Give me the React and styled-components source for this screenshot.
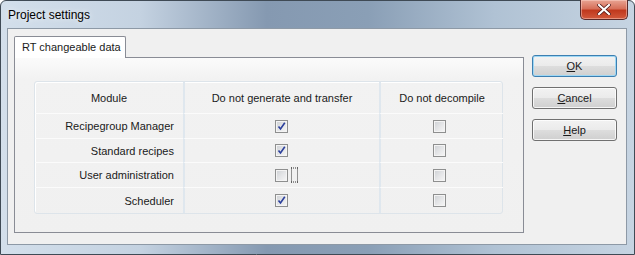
import React from "react";
import styled, { createGlobalStyle } from "styled-components";

const GlobalStyle = createGlobalStyle`
  html, body {
    margin: 0;
    padding: 0;
    background: #ffffff;
  }
  * {
    box-sizing: border-box;
  }
`;

const rows = [
  { name: "Recipegroup Manager", generate: true, decompile: false },
  { name: "Standard recipes", generate: true, decompile: false },
  { name: "User administration", generate: false, decompile: false, focus: true },
  { name: "Scheduler", generate: true, decompile: false },
];

const rowHeights = [25, 24, 25, 26];

export default function App() {
  return (
    <>
      <GlobalStyle />
      <Window>
        <TitleBar>
          <Title>Project settings</Title>
          <CloseButton>
            <svg width="14" height="11" viewBox="0 0 14 11">
              <path
                d="M2 1 L12 10 M12 1 L2 10"
                stroke="#4a1010"
                strokeWidth="3.6"
                strokeLinecap="square"
              />
              <path
                d="M2 1 L12 10 M12 1 L2 10"
                stroke="#ffffff"
                strokeWidth="2.2"
                strokeLinecap="square"
              />
            </svg>
          </CloseButton>
        </TitleBar>
        <Client>
          <TabControl>
            <TabStrip>
              <Tab>RT changeable data</Tab>
            </TabStrip>
            <TabPanel>
              <Table>
                <HeaderCell>Module</HeaderCell>
                <HeaderCell $divider>Do not generate and transfer</HeaderCell>
                <HeaderCell $divider>Do not decompile</HeaderCell>
                {rows.map((row, i) => (
                  <React.Fragment key={row.name}>
                    <LabelCell style={{ height: rowHeights[i] }}>{row.name}</LabelCell>
                    <BoxCell $divider>
                      <Check checked={row.generate} />
                      {row.focus && <FocusMark />}
                    </BoxCell>
                    <BoxCell $divider $shift>
                      <Check checked={row.decompile} />
                    </BoxCell>
                  </React.Fragment>
                ))}
              </Table>
            </TabPanel>
          </TabControl>
          <Buttons>
            <Button $default>
              <u>O</u>K
            </Button>
            <Button>
              <u>C</u>ancel
            </Button>
            <Button>
              <u>H</u>elp
            </Button>
          </Buttons>
        </Client>
      </Window>
    </>
  );
}

const Check = ({ checked }) => (
  <CheckBox>
    {checked && (
      <svg width="9" height="9" viewBox="0 0 9 9">
        <path
          d="M1.5 4.5 L3.5 7 L7.8 0.8"
          fill="none"
          stroke="#2b3f9c"
          strokeWidth="1.6"
        />
      </svg>
    )}
  </CheckBox>
);

const Window = styled.div`
  width: 635px;
  height: 255px;
  display: flex;
  flex-direction: column;
  padding: 0 7px 9px 6px;
  border: 1px solid #3f4a55;
  border-radius: 6px 6px 0 0;
  background: linear-gradient(
    90deg,
    #d3dfeb 0%,
    #c4d2e1 22%,
    #8599b1 42%,
    #8a9fb6 58%,
    #b0c2d4 78%,
    #c6d4e2 100%
  );
  font-family: "Liberation Sans", Arial, sans-serif;
`;

const TitleBar = styled.div`
  height: 28px;
  display: flex;
  justify-content: space-between;
  align-items: flex-start;
`;

const Title = styled.div`
  margin-top: 7px;
  margin-left: 1px;
  font-size: 12px;
  color: #000000;
  text-shadow: 0 0 6px rgba(255, 255, 255, 0.9);
`;

const CloseButton = styled.div`
  width: 48px;
  height: 20px;
  margin-top: -1px;
  margin-right: -1px;
  display: flex;
  align-items: center;
  justify-content: center;
  border: 1px solid #5a2a2a;
  border-top: none;
  border-radius: 0 0 5px 5px;
  background: linear-gradient(180deg, #e8a493 0%, #d7705a 45%, #c0391e 55%, #d2593c 100%);
  box-shadow: inset 0 0 0 1px rgba(255, 220, 210, 0.45);
`;

const Client = styled.div`
  flex: 1;
  display: flex;
  align-items: flex-start;
  padding: 7px 9px 11px 6px;
  background: #f0f0f0;
  border: 1px solid #8d99a6;
`;

const TabControl = styled.div`
  width: 510px;
  height: 197px;
  display: flex;
  flex-direction: column;
`;

const TabStrip = styled.div`
  display: flex;
  height: 21px;
  position: relative;
  z-index: 1;
`;

const Tab = styled.div`
  width: 112px;
  height: 22px;
  padding: 4px 0 0 7px;
  font-size: 11px;
  white-space: nowrap;
  color: #1a1a1a;
  background: #ffffff;
  border: 1px solid #898c95;
  border-bottom: none;
  border-radius: 2px 2px 0 0;
`;

const TabPanel = styled.div`
  flex: 1;
  padding: 23px 20px 0 19px;
  border: 1px solid #898c95;
  background: linear-gradient(180deg, #fbfbfb 0%, #f2f2f2 12%, #f0f0f0 100%);
`;

const Table = styled.div`
  display: grid;
  grid-template-columns: 148px 196px 124px;
  grid-auto-rows: auto;
  border: 1px solid #dde4ea;
  border-radius: 3px;
  box-shadow: inset 1px 1px 0 #ffffff;
`;

const Cell = styled.div`
  display: flex;
  align-items: center;
  font-size: 11px;
  white-space: nowrap;
  color: #1a1a1a;
  border-top: 1px solid #fbfbfb;
  border-left: ${(p) => (p.$divider ? "2px solid #dfe7ee" : "none")};
`;

const HeaderCell = styled(Cell)`
  height: 31px;
  justify-content: center;
  border-top: none;
`;

const LabelCell = styled(Cell)`
  justify-content: flex-end;
  padding-right: 9px;
`;

const BoxCell = styled(Cell)`
  justify-content: center;
  position: relative;
  padding-right: ${(p) => (p.$shift ? "5px" : "2px")};
`;

const CheckBox = styled.div`
  width: 13px;
  height: 13px;
  display: flex;
  align-items: center;
  justify-content: center;
  border: 1px solid #8e8f8f;
  background: linear-gradient(135deg, #cdd0d4 0%, #e4e5e7 50%, #f7f7f7 100%);
  box-shadow: inset 0 0 0 1px #f4f4f4;
`;

const FocusMark = styled.div`
  position: absolute;
  left: 106px;
  top: 50%;
  transform: translateY(-50%);
  width: 7px;
  height: 15px;
  border: 1px dotted #333333;
`;

const Buttons = styled.div`
  display: flex;
  flex-direction: column;
  gap: 10px;
  margin-left: 8px;
  margin-top: 19px;
`;

const Button = styled.div`
  width: 85px;
  height: 22px;
  display: flex;
  align-items: center;
  justify-content: center;
  font-size: 11px;
  color: #1a1a1a;
  border: 1px solid ${(p) => (p.$default ? "#3c7fb1" : "#707070")};
  border-radius: 3px;
  background: linear-gradient(180deg, #f2f2f2 0%, #ebebeb 48%, #dddddd 52%, #cfcfcf 100%);
  box-shadow: inset 0 0 0 1px
    ${(p) => (p.$default ? "#9ed7f4" : "rgba(255, 255, 255, 0.8)")};

  u {
    text-decoration: underline;
  }
`;
